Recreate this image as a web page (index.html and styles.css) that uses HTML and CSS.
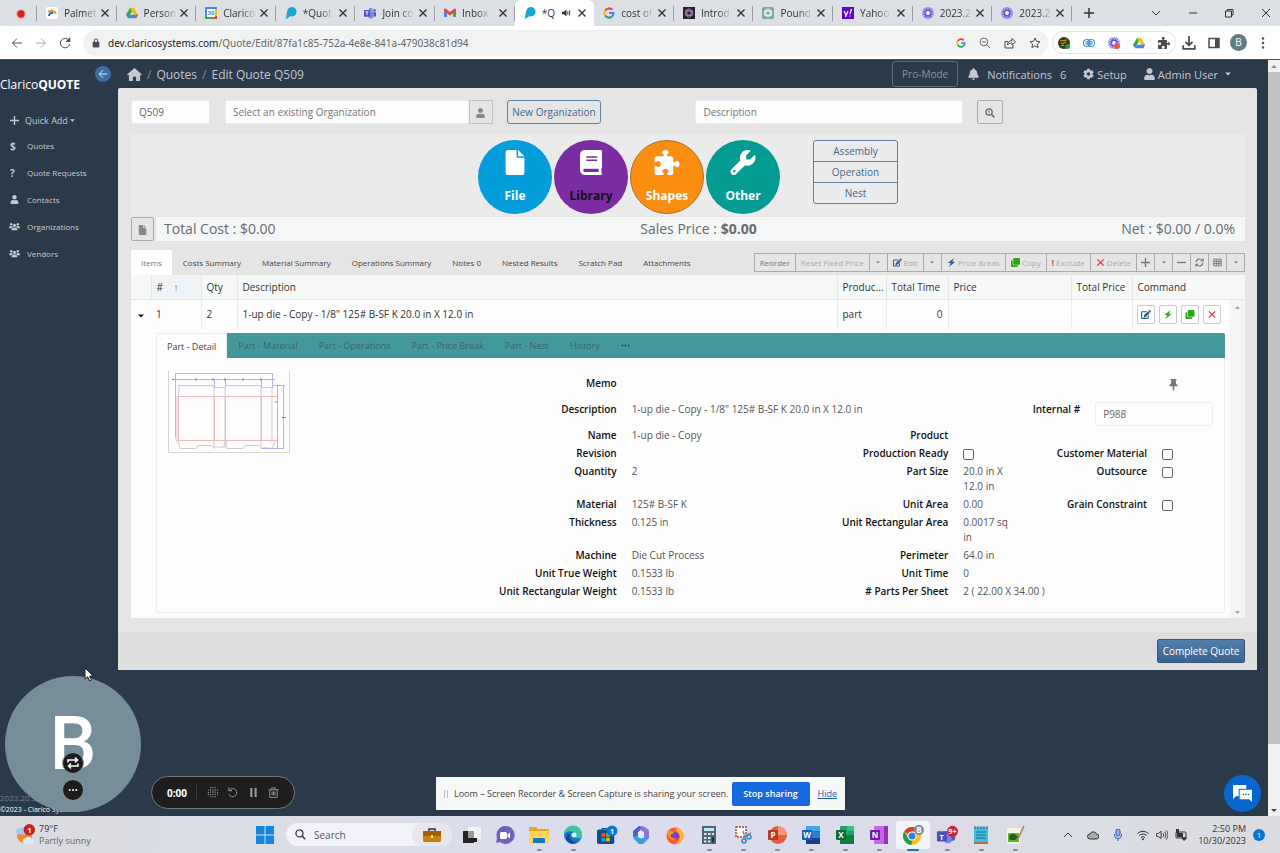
FILE: index.html
```html
<!DOCTYPE html>
<html lang="en">
<head>
    <meta charset="UTF-8">
    <meta name="viewport" content="width=device-width, initial-scale=1.0">
    <title>Edit Quote Q509</title>
    <link rel="stylesheet" href="styles.css">
</head>
<body>
    <!-- icon sprite -->
    <svg class="sprite" aria-hidden="true">
        <symbol id="user" viewBox="0 0 448 512"><path d="M224 256c70.7 0 128-57.3 128-128S294.7 0 224 0 96 57.3 96 128s57.3 128 128 128zm89.600 32h-16.700c-22.200 10.200-46.900 16-72.900 16s-50.600-5.800-72.900-16h-16.700C60.200 288 0 348.200 0 422.400V464c0 26.500 21.500 48 48 48h352c26.500 0 48-21.500 48-48v-41.600c0-74.200-60.200-134.400-134.400-134.400z"/></symbol>
        <symbol id="users" viewBox="0 0 20 14"><circle cx="4" cy="3" r="2.200"/><circle cx="16" cy="3" r="2.200"/><circle cx="10" cy="5" r="2.800"/><path d="M0 10c0-3 1.500-4 4-4 1 0 2 .2 2.500.8C6.500 8 6.500 8 6 9l-1 1zM20 10c0-3-1.500-4-4-4-1 0-2 .2-2.500.8 0 1.200 0 1.200.5 2.200l1 1zM4.500 14c0-3.500 2-5 5.500-5s5.500 1.500 5.500 5z"/></symbol>
        <symbol id="clone" viewBox="0 0 512 512"><path d="M464 0c26.510 0 48 21.490 48 48v288c0 26.510-21.490 48-48 48H176c-26.510 0-48-21.490-48-48V48c0-26.510 21.490-48 48-48h288M176 416c-44.112 0-80-35.888-80-80V128H48c-26.510 0-48 21.490-48 48v288c0 26.510 21.490 48 48 48h288c26.510 0 48-21.490 48-48v-48H176z"/></symbol>
        <symbol id="edit" viewBox="0 0 576 512"><path d="M402.600 83.200l90.200 90.200c3.800 3.800 3.800 10 0 13.800L274.400 405.600l-92.800 10.300c-12.400 1.400-22.900-9.100-21.500-21.500l10.300-92.800L388.800 83.200c3.800-3.800 10-3.800 13.800 0zm162-22.900l-48.800-48.800c-15.200-15.200-39.900-15.200-55.200 0l-35.400 35.400c-3.800 3.800-3.800 10 0 13.800l90.200 90.200c3.800 3.800 10 3.800 13.800 0l35.400-35.400c15.200-15.300 15.200-40 0-55.200zM384 346.200V448H64V128h229.800c3.200 0 6.200-1.300 8.500-3.500l40-40c7.600-7.600 2.200-20.500-8.500-20.500H48C21.500 64 0 85.500 0 112v352c0 26.500 21.500 48 48 48h352c26.500 0 48-21.500 48-48V306.200c0-10.700-12.900-16-20.500-8.500l-40 40c-2.200 2.300-3.500 5.300-3.500 8.500z"/></symbol>
        <symbol id="file" viewBox="0 0 384 512"><path d="M224 136V0H48C21 0 0 21 0 48v416c0 27 21 48 48 48h288c27 0 48-21 48-48V160H248c-13 0-24-11-24-24zm160-8H256V0z"/></symbol>
        <symbol id="book" viewBox="0 0 448 512"><path d="M448 360V24c0-13.300-10.700-24-24-24H96C43 0 0 43 0 96v320c0 53 43 96 96 96h328c13.300 0 24-10.700 24-24v-16c0-7.500-3.500-14.300-8.900-18.700-4.200-15.400-4.200-59.300 0-74.700 5.400-4.300 8.900-11.100 8.900-18.600zM128 134c0-3.300 2.700-6 6-6h212c3.300 0 6 2.700 6 6v20c0 3.300-2.700 6-6 6H134c-3.300 0-6-2.700-6-6v-20zm0 64c0-3.300 2.700-6 6-6h212c3.300 0 6 2.700 6 6v20c0 3.300-2.700 6-6 6H134c-3.300 0-6-2.700-6-6v-20zm253.400 250H96c-17.700 0-32-14.300-32-32 0-17.600 14.400-32 32-32h285.400c-1.900 17.100-1.900 46.900 0 64z"/></symbol>
        <symbol id="puzzle" viewBox="0 0 512 512"><path d="M192 104.800c0-9.200-5.800-17.300-13.200-22.800C167.200 73.300 160 61.300 160 48c0-26.500 28.700-48 64-48s64 21.500 64 48c0 13.300-7.200 25.300-18.800 34c-7.400 5.500-13.200 13.600-13.200 22.800c0 12.800 10.400 23.200 23.200 23.200H336c26.500 0 48 21.500 48 48v56.800c0 12.800 10.400 23.200 23.200 23.200c9.200 0 17.300-5.800 22.800-13.200c8.700-11.600 20.700-18.800 34-18.800c26.500 0 48 28.700 48 64s-21.500 64-48 64c-13.300 0-25.300-7.200-34-18.800c-5.500-7.400-13.600-13.200-22.800-13.200c-12.800 0-23.200 10.400-23.200 23.200V464c0 26.500-21.500 48-48 48H279.200c-12.800 0-23.200-10.400-23.200-23.200c0-9.200 5.800-17.300 13.200-22.800c11.600-8.700 18.800-20.700 18.800-34c0-26.500-28.700-48-64-48s-64 21.500-64 48c0 13.300 7.200 25.300 18.800 34c7.400 5.500 13.200 13.600 13.200 22.800c0 12.800-10.400 23.200-23.200 23.200H48c-26.500 0-48-21.500-48-48V343.200C0 330.400 10.400 320 23.200 320c9.200 0 17.300 5.800 22.800 13.200C54.700 344.800 66.700 352 80 352c26.500 0 48-28.700 48-64s-21.500-64-48-64c-13.300 0-25.300 7.200-34 18.800C40.500 250.200 32.400 256 23.200 256C10.400 256 0 245.600 0 232.800V176c0-26.500 21.500-48 48-48H168.800c12.800 0 23.200-10.400 23.200-23.200z"/></symbol>
        <symbol id="wrench" viewBox="0 0 512 512"><path d="M352 320c88.400 0 160-71.600 160-160c0-15.300-2.200-30.100-6.200-44.200c-3.100-10.800-16.400-13.200-24.300-5.300l-76.800 76.800c-3 3-7.100 4.700-11.300 4.700H336c-8.800 0-16-7.200-16-16V118.600c0-4.200 1.700-8.300 4.700-11.300l76.800-76.800c7.900-7.900 5.400-21.200-5.300-24.300C382.100 2.200 367.300 0 352 0C263.600 0 192 71.600 192 160c0 19.100 3.400 37.500 9.500 54.500L19.900 396.100C7.200 408.800 0 426.100 0 444.100C0 481.600 30.400 512 67.900 512c18 0 35.300-7.200 48-19.900L297.500 310.500c17 6.200 35.400 9.500 54.500 9.500zM80 408a24 24 0 1 1 0 48 24 24 0 1 1 0-48z"/></symbol>
        <symbol id="bell" viewBox="0 0 448 512"><path d="M224 0c-17.700 0-32 14.300-32 32V51.200C119 66 64 130.600 64 208v18.800c0 47-17.300 92.400-48.500 127.600l-7.400 8.300c-8.400 9.400-10.400 22.900-5.300 34.400S19.400 416 32 416H416c12.600 0 24-7.400 29.200-18.900s3.100-25-5.300-34.400l-7.400-8.300C401.300 319.200 384 273.900 384 226.800V208c0-77.400-55-142-128-156.800V32c0-17.700-14.300-32-32-32zm45.300 493.300c12-12 18.700-28.300 18.700-45.300H224 160c0 17 6.700 33.300 18.700 45.300s28.300 18.700 45.300 18.700s33.300-6.700 45.300-18.700z"/></symbol>
        <symbol id="gear" viewBox="0 0 512 512"><path d="M487.400 315.700l-42.600-24.600c4.300-23.200 4.300-47 0-70.200l42.600-24.600c4.900-2.800 7.100-8.600 5.500-14-11.100-35.600-30-67.800-54.700-94.600-3.800-4.100-10-5.100-14.800-2.300L380.800 110c-17.900-15.400-38.500-27.300-60.800-35.100V25.800c0-5.600-3.900-10.500-9.400-11.700-36.700-8.200-74.300-7.800-109.200 0-5.500 1.200-9.400 6.100-9.400 11.700V75c-22.200 7.900-42.800 19.800-60.800 35.100L88.700 85.500c-4.900-2.800-11-1.900-14.800 2.300-24.700 26.700-43.600 58.900-54.700 94.600-1.700 5.400.6 11.200 5.500 14L67.300 221c-4.300 23.200-4.300 47 0 70.200l-42.600 24.600c-4.900 2.800-7.100 8.600-5.500 14 11.100 35.600 30 67.800 54.700 94.600 3.800 4.100 10 5.100 14.800 2.300l42.600-24.600c17.900 15.400 38.500 27.300 60.800 35.100v49.200c0 5.600 3.900 10.500 9.400 11.700 36.700 8.200 74.300 7.800 109.200 0 5.500-1.200 9.400-6.100 9.400-11.700v-49.200c22.200-7.900 42.800-19.800 60.800-35.100l42.600 24.600c4.900 2.800 11 1.900 14.800-2.300 24.700-26.700 43.600-58.900 54.700-94.600 1.500-5.500-.7-11.300-5.600-14.100zM256 336c-44.100 0-80-35.900-80-80s35.900-80 80-80 80 35.900 80 80-35.900 80-80 80z"/></symbol>
        <symbol id="home" viewBox="0 0 16 14"><path d="M8 0l8 7-1 1.200-1-.8V14H9.700V9.500H6.300V14H2V7.400l-1 .8L0 7z"/></symbol>
        <symbol id="bolt" viewBox="0 0 12 12"><path d="M9.500 0L1 6.500h4L2.500 12 11 5H7z"/></symbol>
        <symbol id="pin" viewBox="0 0 10 14"><path d="M1.500 0h7v1.500h-1l.5 4c1.200.6 2 1.500 2 3H6V12l-1 2-1-2V8.500H0c0-1.500.8-2.400 2-3l.5-4h-1z"/></symbol>
        <symbol id="cross" viewBox="0 0 10 10"><path d="M1.500 1.500l7 7M8.500 1.500l-7 7" fill="none" stroke="currentColor" stroke-width="1.400"/></symbol>
        <symbol id="plus" viewBox="0 0 10 10"><path d="M5 0v10M0 5h10" fill="none" stroke="currentColor" stroke-width="1.500"/></symbol>
        <symbol id="minus" viewBox="0 0 10 10"><path d="M0 5h10" fill="none" stroke="currentColor" stroke-width="1.500"/></symbol>
        <symbol id="caret" viewBox="0 0 8 4"><path d="M0 0h8L4 4z"/></symbol>
        <symbol id="caret-up" viewBox="0 0 8 4"><path d="M0 4h8L4 0z"/></symbol>
        <symbol id="refresh" viewBox="0 0 12 12"><path d="M1.500 5.500A4.500 4.500 0 0 1 9.500 3M10.500 6.500A4.500 4.500 0 0 1 2.500 9" fill="none" stroke="currentColor" stroke-width="1.500"/><path d="M11.500 0v4.500H7zM.5 12V7.500H5z"/></symbol>
        <symbol id="table" viewBox="0 0 12 12"><path d="M1 1.500h10v9H1zM1 4.500h10M1 7.500h10M4.500 2v8M8 2v8" fill="none" stroke="currentColor" stroke-width="1.200"/></symbol>
        <symbol id="search" viewBox="0 0 14 14"><path d="M9.300 9.300L13 13" fill="none" stroke="currentColor" stroke-width="1.600"/><circle cx="5.700" cy="5.700" r="4.500" fill="none" stroke="currentColor" stroke-width="1.400"/></symbol>
        <symbol id="lookup" viewBox="0 0 14 14"><path d="M9 9l4 4" fill="none" stroke="currentColor" stroke-width="2.600"/><circle cx="5.700" cy="5.700" r="4.400" fill="none" stroke="currentColor" stroke-width="2"/><path d="M5.700 3.500v4.400M4.500 5h1.500" fill="none" stroke="currentColor"/></symbol>
        <symbol id="google" viewBox="0 0 14 14"><g fill="none" stroke-width="2.400"><path d="M2.600 4.200A5.200 5.200 0 0 1 10.800 3.200" stroke="#ea4335"/><path d="M2.600 9.800a5.200 5.200 0 0 1 0-5.600" stroke="#fbbc05"/><path d="M2.600 9.800a5.200 5.200 0 0 0 7.800 1.400" stroke="#34a853"/><path d="M7 7h5.200a5.200 5.200 0 0 1-1.800 4.200" stroke="#4285f4"/></g></symbol>
        <symbol id="drive" viewBox="0 0 14 12"><path d="M4.800 0h4.400L14 8H9.500z" fill="#fbbc04"/><path d="M4.800 0L7 4 2.300 12 0 8z" fill="#34a853"/><path d="M4.500 8H14l-2.300 4H2.300z" fill="#4285f4"/><path d="M11.600 8H14l-2.300 4z" fill="#ea4335"/></symbol>
        <symbol id="loom" viewBox="0 0 14 14"><g stroke="#6259e8" stroke-width="1.300"><path d="M7 0v14M0 7h14M2 2l10 10M12 2L2 12M4.300.6l5.400 12.800M9.700.6L4.300 13.400M.6 4.300l12.800 5.400M.6 9.700l12.800-5.400"/></g><circle cx="7" cy="7" r="3.600" fill="#6259e8"/><circle cx="7" cy="7" r="2.200" fill="#fff"/></symbol>
        <symbol id="quote" viewBox="0 0 14 14"><circle cx="8" cy="5.500" r="5.500" fill="#18a5d4"/><path d="M2.500 5L1 14l5-3z" fill="#18a5d4"/></symbol>
        <symbol id="teams" viewBox="0 0 16 14"><circle cx="9" cy="2.500" r="2.500" fill="#7b83eb"/><circle cx="14" cy="3.500" r="1.700" fill="#5059c9"/><path d="M6 5h7v6a4 4 0 0 1-7 2z" fill="#7b83eb"/><path d="M13 6h3v4a2.500 2.500 0 0 1-3 2z" fill="#5059c9"/><path d="M0 3h8v9H0z" fill="#4b53bc"/><path d="M2 5.500h4M4 5.500V10" stroke="#fff" stroke-width="1.200"/></symbol>
        <symbol id="openai" viewBox="0 0 14 14"><g fill="none" stroke="currentColor" stroke-width=".9"><ellipse cx="7" cy="7" rx="2.500" ry="5"/><ellipse cx="7" cy="7" rx="2.500" ry="5" transform="rotate(60 7 7)"/><ellipse cx="7" cy="7" rx="2.500" ry="5" transform="rotate(120 7 7)"/></g></symbol>
        <symbol id="dots" viewBox="0 0 12 4"><circle cx="2" cy="2" r="1.200"/><circle cx="6" cy="2" r="1.200"/><circle cx="10" cy="2" r="1.200"/></symbol>
    </svg>

    <div class="tab-strip">
        <div class="tab-pinned"><svg class="i12" viewBox="0 0 12 12"><circle cx="6" cy="6" r="5" fill="#f2b8b5"/><circle cx="6" cy="6" r="3.700" fill="#d5221d"/></svg></div>
        <div class="tabs">
            <div class="tab"><svg class="i12" viewBox="0 0 12 12"><rect width="12" height="12" rx="2" fill="#fff"/><path d="M2 5a5 5 0 0 1 8 2" fill="none" stroke="#f28c28" stroke-width="2"/><path d="M3 9a3 3 0 0 1 4-3" fill="none" stroke="#1b6ca8" stroke-width="2"/></svg><span>Palmet</span><button aria-label="Close"><svg><use href="#cross"/></svg></button></div>
            <div class="tab"><svg class="i12"><use href="#drive"/></svg><span>Person</span><button aria-label="Close"><svg><use href="#cross"/></svg></button></div>
            <div class="tab"><svg class="i12" viewBox="0 0 12 12"><path d="M0 0h12v12H0z" fill="#4285f4"/><path d="M9 9h3v3H9z" fill="#ea4335"/><path d="M0 9h9v3H0z" fill="#34a853"/><path d="M9 2h3v7H9z" fill="#fbbc04"/><path d="M2 2h8v8H2z" fill="#fff"/><text x="6" y="8" class="day">30</text></svg><span>Clarico</span><button aria-label="Close"><svg><use href="#cross"/></svg></button></div>
            <div class="tab"><svg class="i12"><use href="#quote"/></svg><span>*Quot</span><button aria-label="Close"><svg><use href="#cross"/></svg></button></div>
            <div class="tab"><svg class="i12"><use href="#teams"/></svg><span>Join co</span><button aria-label="Close"><svg><use href="#cross"/></svg></button></div>
            <div class="tab"><svg class="i12" viewBox="0 0 12 10"><path d="M0 1v8h3V4z" fill="#4285f4"/><path d="M12 1v8H9V4z" fill="#34a853"/><path d="M0 1l1.500-.5L6 4 10.500.5 12 1v2L6 7.500 0 3z" fill="#ea4335"/></svg><span>Inbox</span><button aria-label="Close"><svg><use href="#cross"/></svg></button></div>
            <div class="tab active"><svg class="i12"><use href="#quote"/></svg><span class="short">*Q</span><svg class="sound" viewBox="0 0 10 8"><path d="M0 2.500h2L5 0v8L2 5.500H0z"/><path d="M6.500 2v4M8.500 1v6" stroke="#333"/></svg><button aria-label="Close"><svg><use href="#cross"/></svg></button></div>
            <div class="tab"><svg class="i12"><use href="#google"/></svg><span>cost of</span><button aria-label="Close"><svg><use href="#cross"/></svg></button></div>
            <div class="tab"><svg class="i12 gpt-dark"><use href="#openai"/></svg><span>Introd</span><button aria-label="Close"><svg><use href="#cross"/></svg></button></div>
            <div class="tab"><svg class="i12 gpt-green"><use href="#openai"/></svg><span>Pound</span><button aria-label="Close"><svg><use href="#cross"/></svg></button></div>
            <div class="tab"><svg class="i12" viewBox="0 0 12 12"><path d="M0 0h12v12H0z" fill="#5f01d1"/><path d="M2 4l2 4M6 4L3.500 10M9.500 2L8 7M7.700 8.500v1" stroke="#fff" stroke-width="1.300"/></svg><span>Yahoo</span><button aria-label="Close"><svg><use href="#cross"/></svg></button></div>
            <div class="tab"><svg class="i12"><use href="#loom"/></svg><span>2023.2</span><button aria-label="Close"><svg><use href="#cross"/></svg></button></div>
            <div class="tab"><svg class="i12"><use href="#loom"/></svg><span>2023.2</span><button aria-label="Close"><svg><use href="#cross"/></svg></button></div>
        </div>
        <div class="window-controls">
            <button aria-label="New tab"><svg><use href="#plus"/></svg></button>
            <button aria-label="Search tabs"><svg viewBox="0 0 10 10"><path d="M1 3l4 4 4-4" class="line"/></svg></button>
            <button aria-label="Minimize"><svg viewBox="0 0 10 10"><path d="M1 5h8" class="line"/></svg></button>
            <button aria-label="Restore"><svg viewBox="0 0 10 10"><path d="M1.500 3h6v6h-6zM3.500 3V1.500H9v5.500H7.500" class="line"/></svg></button>
            <button aria-label="Close window"><svg viewBox="0 0 10 10"><path d="M1 1l8 8M9 1L1 9" class="line"/></svg></button>
        </div>
    </div>

    <div class="address-bar">
        <button aria-label="Back"><svg viewBox="0 0 12 12"><path d="M11 6H1.500M6 1.500L1.500 6 6 10.500" class="line"/></svg></button>
        <button aria-label="Forward" class="dim"><svg viewBox="0 0 12 12"><path d="M1 6h9.500M6 1.500L10.500 6 6 10.500" class="line"/></svg></button>
        <button aria-label="Reload"><svg viewBox="0 0 12 12"><path d="M10 3.500A4.700 4.700 0 1 0 10.700 7" class="line"/><path d="M11.300 0v5H6.500z"/></svg></button>
        <div class="omnibox">
            <svg class="i10" viewBox="0 0 10 12"><rect x="1" y="4.500" width="8" height="7" rx="1"/><path d="M3 5V3a2 2 0 0 1 4 0v2" fill="none" stroke="currentColor" stroke-width="1.200"/></svg>
            <span class="url"><b>dev.claricosystems.com</b>/Quote/Edit/87fa1c85-752a-4e8e-841a-479038c81d94</span>
            <svg class="i10"><use href="#google"/></svg>
            <svg class="i12" viewBox="0 0 14 14"><path d="M9.300 9.300L13 13M3.500 5.700h4.400" class="line"/><circle cx="5.700" cy="5.700" r="4.500" class="line"/></svg>
            <svg class="i12" viewBox="0 0 12 12"><path d="M4 4.500H1v6.500h8V8M3.500 8c0-3 2-4.500 4.500-4.500V1.500L11.500 5 8 8V6C6 6 4.500 6.500 3.500 8z" class="line"/></svg>
            <svg class="i12" viewBox="0 0 12 12"><path d="M6 1l1.500 3.300 3.500.4-2.600 2.400.7 3.500L6 8.900l-3.100 1.700.7-3.500L1 4.700l3.500-.4z" class="line"/></svg>
        </div>
        <div class="extensions">
            <svg class="i12" viewBox="0 0 12 12"><circle cx="6" cy="6" r="6" fill="#3b3a14"/><path d="M2 4l7-1M3 7l5-2M3 9l3-1" stroke="#c9a53c"/><circle cx="9.500" cy="9.500" r="2.500" fill="#1e9c3c"/></svg>
            <svg class="i12" viewBox="0 0 14 10"><g fill="none" stroke="#4a8fd0" stroke-width="1.200"><circle cx="4.500" cy="5" r="4"/><circle cx="9.500" cy="5" r="4"/><circle cx="5" cy="5" r="1.800"/><circle cx="9" cy="5" r="1.800"/></g></svg>
            <svg class="i12" viewBox="0 0 14 14"><use href="#loom"/><circle cx="10.500" cy="10.500" r="3.500" fill="#f0553f"/></svg>
            <svg class="i12"><use href="#drive"/></svg>
            <svg class="i12"><use href="#puzzle"/></svg>
        </div>
        <svg class="i14" viewBox="0 0 12 12"><path d="M6 0v7.500M3 5l3 3 3-3M1 8v3h10V8" class="line medium"/></svg>
        <svg class="i12" viewBox="0 0 12 12"><path d="M1 1.500h10v9H1z" class="line medium"/><path d="M7 1h4v10H7z"/></svg>
        <span class="profile">B</span>
        <svg class="i12" viewBox="0 0 12 12"><circle cx="6" cy="1.500" r="1.200"/><circle cx="6" cy="6" r="1.200"/><circle cx="6" cy="10.500" r="1.200"/></svg>
    </div>

    <div class="app">
        <nav class="sidebar">
            <div class="brand"><span>Clarico<b>QUOTE</b></span><button class="collapse" aria-label="Collapse menu"><svg viewBox="0 0 12 12"><path d="M11 6H1.500M6 1.500L1.500 6 6 10.500" class="line"/></svg></button></div>
            <a href="#" class="quick"><svg><use href="#plus"/></svg>Quick Add<svg class="caret"><use href="#caret"/></svg></a>
            <a href="#"><i>$</i>Quotes</a>
            <a href="#"><i>?</i>Quote Requests</a>
            <a href="#"><svg><use href="#user"/></svg>Contacts</a>
            <a href="#"><svg><use href="#users"/></svg>Organizations</a>
            <a href="#"><svg><use href="#users"/></svg>Vendors</a>
            <div class="version">2023.20.5</div>
            <div class="copyright">©2023 - Clarico Systems</div>
        </nav>

        <main class="main">
            <header class="topbar">
                <svg class="home"><use href="#home"/></svg>
                <span class="slash">/</span><a href="#">Quotes</a><span class="slash">/</span><span>Edit Quote Q509</span>
                <div class="top-links">
                    <button class="pro-mode">Pro-Mode</button>
                    <a href="#" class="notify"><svg><use href="#bell"/></svg>Notifications<span>6</span></a>
                    <a href="#" class="setup"><svg><use href="#gear"/></svg>Setup</a>
                    <a href="#"><svg><use href="#user"/></svg>Admin User<svg class="caret"><use href="#caret"/></svg></a>
                </div>
            </header>

            <section class="panel">
                <div class="panel-body">
                    <div class="quote-row">
                        <input class="quote-no" aria-label="Quote number" value="Q509">
                        <div class="org">
                            <input aria-label="Organization" placeholder="Select an existing Organization">
                            <button aria-label="Contact"><svg><use href="#user"/></svg></button>
                        </div>
                        <button class="outline new-org">New Organization</button>
                        <input class="quote-desc" aria-label="Description" placeholder="Description">
                        <button class="lookup" aria-label="Search"><svg><use href="#lookup"/></svg></button>
                    </div>

                    <div class="add-row">
                        <div class="circles">
                            <button class="circle file"><svg><use href="#file"/></svg>File</button>
                            <button class="circle library"><svg><use href="#book"/></svg>Library</button>
                            <button class="circle shapes"><svg><use href="#puzzle"/></svg>Shapes</button>
                            <button class="circle other"><svg><use href="#wrench"/></svg>Other</button>
                        </div>
                        <div class="stack">
                            <button>Assembly</button>
                            <button>Operation</button>
                            <button>Nest</button>
                        </div>
                    </div>

                    <div class="totals">
                        <button aria-label="Report"><svg><use href="#file"/></svg></button>
                        <div class="totals-bar">
                            <span>Total Cost : $0.00</span>
                            <span>Sales Price : <b>$0.00</b></span>
                            <span>Net : $0.00 / 0.0%</span>
                        </div>
                    </div>

                    <div class="item-tabs">
                        <button class="item-tab active">Items</button>
                        <button class="item-tab">Costs Summary</button>
                        <button class="item-tab">Material Summary</button>
                        <button class="item-tab">Operations Summary</button>
                        <button class="item-tab">Notes 0</button>
                        <button class="item-tab">Nested Results</button>
                        <button class="item-tab">Scratch Pad</button>
                        <button class="item-tab">Attachments</button>
                        <div class="tools">
                            <button class="on">Reorder</button>
                            <button>Reset Fixed Price</button>
                            <button class="drop" aria-label="Price options"><svg class="caret"><use href="#caret"/></svg></button>
                            <button><svg class="blue"><use href="#edit"/></svg>Edit</button>
                            <button class="drop" aria-label="Edit options"><svg class="caret"><use href="#caret"/></svg></button>
                            <button><svg class="blue"><use href="#bolt"/></svg>Price Break</button>
                            <button><svg class="green"><use href="#clone"/></svg>Copy</button>
                            <button><b class="red">!</b>Exclude</button>
                            <button><svg class="red"><use href="#cross"/></svg>Delete</button>
                            <button class="drop" aria-label="Add"><svg><use href="#plus"/></svg></button>
                            <button class="drop" aria-label="Add options"><svg class="caret"><use href="#caret"/></svg></button>
                            <button class="drop" aria-label="Remove"><svg><use href="#minus"/></svg></button>
                            <button class="drop" aria-label="Refresh"><svg><use href="#refresh"/></svg></button>
                            <button class="drop" aria-label="Columns"><svg><use href="#table"/></svg></button>
                            <button class="drop" aria-label="Column options"><svg class="caret"><use href="#caret"/></svg></button>
                        </div>
                    </div>

                    <table class="items">
                        <colgroup>
                            <col class="c-expand"><col class="c-num"><col class="c-qty"><col><col class="c-product"><col class="c-time"><col class="c-price"><col class="c-total"><col class="c-command"><col class="c-scroll">
                        </colgroup>
                        <thead>
                            <tr><th></th><th class="sorted"># <span>↑</span></th><th>Qty</th><th>Description</th><th>Produc...</th><th>Total Time</th><th>Price</th><th>Total Price</th><th class="bare">Command</th><th class="bare"></th></tr>
                        </thead>
                        <tbody>
                            <tr class="item">
                                <td class="expand"><svg><use href="#caret"/></svg></td><td>1</td><td>2</td>
                                <td>1-up die - Copy - 1/8" 125# B-SF K 20.0 in X 12.0 in</td>
                                <td>part</td><td class="num">0</td><td></td><td></td>
                                <td class="commands"><div>
                                    <button aria-label="Edit item"><svg class="blue"><use href="#edit"/></svg></button>
                                    <button aria-label="Price item"><svg class="green"><use href="#bolt"/></svg></button>
                                    <button aria-label="Copy item"><svg class="green"><use href="#clone"/></svg></button>
                                    <button aria-label="Delete item"><svg class="red"><use href="#cross"/></svg></button>
                                </div></td>
                                <td class="scroll" rowspan="2"><div><svg><use href="#caret-up"/></svg><svg><use href="#caret"/></svg></div></td>
                            </tr>
                            <tr>
                                <td colspan="9" class="nested">
                                    <div class="part">
                                        <div class="part-tabs">
                                            <button class="active">Part - Detail</button>
                                            <button>Part - Material</button>
                                            <button>Part - Operations</button>
                                            <button>Part - Price Break</button>
                                            <button>Part - Nest</button>
                                            <button>History</button>
                                            <button class="more" aria-label="More tabs"><svg><use href="#dots"/></svg></button>
                                        </div>
                                        <div class="part-body">
                                            <svg class="thumb" viewBox="0 0 122 82">
                                                <path d="M.5 0v81.500h121V0" stroke="#d8d8c8"/>
                                                <path d="M10 14.500h35l1 2h11l1-2h34l1 2h11M11 14.500v3l-1 8v44l2 8h16l2-3h13l3 3 1-2 8 1 3-7 1 8h16l2-3h14l3 3 2-1 8 1 3-7M46 17v60M57 17v60M93 17v60M104 17v55M8 25v44l2 3" stroke="#bbb4bf" stroke-width=".700"/>
                                                <path d="M10 25.500h99M10 69.500h99M10.500 25v44M46.500 25v44M57.500 25v44M93.500 25v44" stroke="#f0baba"/>
                                                <path d="M7 2.500h97M7.500 2v64M104.500 2v15M4 8.500h103M46.500 8v8M57.500 8v8M93.500 8v8M104 14.500h13M109.500 14v63M115.500 14v63M93 77.500h23" stroke="#b3b2f0"/>
                                                <path d="M4 8.500h3M28 7v3M45 7v3M57 7v3M75 7v3M93 7v3M108 30v2M114 46.500h4" stroke="#7c7adf"/>
                                            </svg>
                                            <div class="fields">
                                                <div class="field wide memo"><b>Memo</b><span></span><i></i><svg class="pin"><use href="#pin"/></svg></div>
                                                <div class="field wide"><b>Description</b><span>1-up die - Copy - 1/8" 125# B-SF K 20.0 in X 12.0 in</span><label for="internal">Internal #</label><input id="internal" class="internal" value="P988"></div>
                                                <div class="field"><b>Name</b><span>1-up die - Copy</span><b>Product</b></div>
                                                <div class="field"><b>Revision</b><span></span><label for="ready">Production Ready</label><input type="checkbox" id="ready"><label for="customer">Customer Material</label><input type="checkbox" id="customer"></div>
                                                <div class="field"><b>Quantity</b><span>2</span><b>Part Size</b><span>20.0 in X 12.0 in</span><label for="outsource">Outsource</label><input type="checkbox" id="outsource"></div>
                                                <div class="field"><b>Material</b><span>125# B-SF K</span><b>Unit Area</b><span>0.00</span><label for="grain">Grain Constraint</label><input type="checkbox" id="grain"></div>
                                                <div class="field"><b>Thickness</b><span>0.125 in</span><b>Unit Rectangular Area</b><span>0.0017 sq in</span></div>
                                                <div class="field"><b>Machine</b><span>Die Cut Process</span><b>Perimeter</b><span>64.0 in</span></div>
                                                <div class="field"><b>Unit True Weight</b><span>0.1533 lb</span><b>Unit Time</b><span>0</span></div>
                                                <div class="field"><b>Unit Rectangular Weight</b><span>0.1533 lb</span><b># Parts Per Sheet</b><span class="nowrap">2 ( 22.00 X 34.00 )</span></div>
                                            </div>
                                        </div>
                                    </div>
                                </td>
                            </tr>
                        </tbody>
                    </table>
                </div>
                <footer class="panel-footer"><button>Complete Quote</button></footer>
            </section>
        </main>

        <div class="page-scroll"><svg><use href="#caret-up"/></svg><div class="thumb-bar"></div><svg class="down"><use href="#caret"/></svg></div>

        <!-- floating layers -->
        <div class="camera">
            B
            <button class="swap" aria-label="Switch camera"><svg viewBox="0 0 14 14"><path d="M2 6.500V4h9.500M9 1.500L11.500 4 9 6.500M12 7.500V10H2.500M5 7.500L2.500 10 5 12.500" class="line medium"/></svg></button>
            <button class="dots" aria-label="More options"><svg><use href="#dots"/></svg></button>
        </div>
        <svg class="cursor" viewBox="0 0 10 15"><path d="M1 1v11l2.700-2.300L5.500 14l2-.9-1.800-4L9.200 9z" fill="#fff" stroke="#222"/></svg>
        <div class="recorder">
            <b>0:00</b>
            <span class="divider"></span>
            <svg viewBox="0 0 12 12"><path d="M1.500 3v6M4 0v12M6.500 0v12M9 0v12M11.500 3v6" stroke="currentColor" stroke-width="1.200" stroke-dasharray="1.200 1.300"/></svg>
            <svg viewBox="0 0 12 12"><path d="M2.500 3.500A4.500 4.500 0 1 1 2 8M2 .5v3.500h3.500" class="line"/></svg>
            <svg viewBox="0 0 12 12"><path d="M2.500 1h2.300v10H2.500zM7.200 1h2.300v10H7.200z"/></svg>
            <svg viewBox="0 0 12 12"><path d="M.5 3h11M4 3V1h4v2M2 3v8.300h8V3M4.500 5v4M6 5v4M7.500 5v4" class="line"/></svg>
        </div>
        <div class="share-bar">
            <span class="grip"></span>
            <span class="share-text">Loom – Screen Recorder &amp; Screen Capture is sharing your screen.</span>
            <button>Stop sharing</button>
            <a href="#">Hide</a>
        </div>
        <button class="chat" aria-label="Chat"><svg viewBox="0 0 20 18"><path d="M0 0h14v4H6v8H3l-3 3z" fill="#fff"/><path d="M7 5h13v13l-3-3H7z" fill="#fff"/><path d="M10 10h1.500M12.800 10h1.500M15.600 10h1.500" stroke="#0a66cf" stroke-width="1.300"/></svg></button>
    </div>

    <div class="taskbar">
        <div class="weather">
            <svg viewBox="0 0 22 22"><circle cx="10" cy="12" r="8" fill="#f08a24"/><path d="M1 9a3 3 0 0 1 3-4 4 4 0 0 1 7 3 2 2 0 0 1-1 3H3z" fill="#a8c8f4"/><path d="M8 19a3 3 0 0 1 3-4 4 4 0 0 1 7 1 2 2 0 0 1 0 5h-8z" fill="#dce9fb"/><circle cx="15" cy="6" r="6" fill="#c62020"/><text x="15" y="9" class="badge-text">1</text></svg>
            <div><strong>79°F</strong><span>Partly sunny</span></div>
        </div>
        <div class="apps">
            <svg class="start" viewBox="0 0 18 18"><path d="M0 0h8.500v8.500H0zM9.500 0H18v8.500H9.500zM0 9.500h8.500V18H0zM9.500 9.500H18V18H9.500z" fill="#1487dc"/></svg>
            <label class="search"><svg><use href="#search"/></svg><input placeholder="Search" aria-label="Search"><span class="brief"><svg viewBox="0 0 18 14"><path d="M6 3V1h6v2" fill="none" stroke="#4b3010" stroke-width="1.500"/><rect y="3" width="18" height="11" rx="1" fill="#c8800f"/><path d="M0 3h18v5H0z" fill="#a05d0b"/><path d="M8 7h2v3H8z" fill="#ffe07a"/></svg></span></label>
            <span class="app-icon"><svg viewBox="0 0 20 20"><path d="M7 2h13v12H7z" fill="#f2f2f2"/><path d="M2 6h11v12H2z" fill="#222"/><path d="M7 6h6v7H7z" fill="#999"/><path d="M2 13h14v4H2z" fill="#222"/></svg></span>
            <span class="app-icon"><svg viewBox="0 0 20 20"><path d="M10 1a9 9 0 1 1-5 16l-4 1 1-5a9 9 0 0 1 8-12z" fill="#6f62bd"/><rect x="5" y="7" width="7" height="7" rx="1.500" fill="#fff"/><path d="M12.500 9.500L15 7.500v6l-2.500-2z" fill="#fff"/></svg></span>
            <span class="app-icon running"><svg viewBox="0 0 20 20"><path d="M0 3q0-1 1-1h6l2 2h10q1 0 1 1v12H0z" fill="#e7a81d"/><path d="M0 6h20v11q0 1-1 1H1q-1 0-1-1z" fill="#ffd25a"/><path d="M4 18v-4q0-1 1-1h10q1 0 1 1v4z" fill="#1976c5"/></svg></span>
            <span class="app-icon running"><svg viewBox="0 0 20 20"><circle cx="10" cy="10" r="9" fill="#1476c6"/><path d="M1 9a9 9 0 0 1 18 1c0 4-5 4-7 2 3-4-5-9-11-3z" fill="#3fc6a0"/><path d="M7 9c-2 4 3 9 8 8-4 3-10 2-12-3 0-3 2-5 4-5z" fill="#0c4b96"/><circle cx="11" cy="10" r="2.500" fill="#dff3fb"/></svg></span>
            <span class="app-icon"><svg viewBox="0 0 24 22"><path d="M7 6V4h7v2" fill="none" stroke="#0d5794" stroke-width="1.500"/><rect x="1" y="5" width="19" height="16" rx="2" fill="#0b4f8c"/><path d="M6 9h4v4H6z" fill="#f25022"/><path d="M11 9h4v4h-4z" fill="#7fba00"/><path d="M6 14h4v4H6z" fill="#00a4ef"/><path d="M11 14h4v4h-4z" fill="#ffb900"/><circle cx="17.500" cy="6.500" r="6" fill="#0a78d1"/><text x="17.500" y="10" class="badge-text">1</text></svg></span>
            <span class="app-icon"><svg viewBox="0 0 20 20"><path d="M8 1l5 1-6 5v7l-5-2V6z" fill="#4a62d0"/><path d="M12 1l6 4v8l-5 2V7L8 4z" fill="#8f72dc"/><path d="M2 13l5-3 5 3 6 0-6 6H8z" fill="#3d9ddd"/><path d="M7 8l3-2 3 2v4l-3 1.500L7 12z" fill="#e6e6f4"/></svg></span>
            <span class="app-icon"><svg viewBox="0 0 20 20"><circle cx="10" cy="11" r="8.500" fill="#ff5a36"/><path d="M12 1c1 3 7 4 7 10a9 9 0 0 1-9 8c6-4 6-9 3-11-2-2-2-5-1-7z" fill="#ffb52e"/><circle cx="10" cy="11" r="4" fill="#7b3fc4"/><path d="M2 6c3-1 5 0 7 2l-4 2c1 3 4 4 7 3-3 4-9 2-10-7z" fill="#ff9324"/></svg></span>
            <span class="app-icon running"><svg viewBox="0 0 20 20"><rect x="3" y="1" width="14" height="18" fill="#4d6678"/><path d="M5 3h10v3H5z" fill="#bfe6f5"/><path d="M5 8h2.500v2H5zM9 8h2.500v2H9zM5 12h2.500v2H5zM9 12h2.500v2H9zM5 15.500h2.500v2H5zM9 15.500h2.500v2H9zM12.800 8H15v2h-2.200z" fill="#d7e6ee"/><path d="M12.800 12H15v5.500h-2.200z" fill="#1d3345"/></svg></span>
            <span class="app-icon running"><svg viewBox="0 0 20 20"><path d="M3 2h10v10H3z" fill="#fff" stroke="#c0392b" stroke-width="1.500" stroke-dasharray="2 1"/><path d="M10 6l3 10M18 8l-8 4" stroke="#7b8894" stroke-width="1.500"/><circle cx="11" cy="16" r="2" fill="none" stroke="#2b8dc5" stroke-width="1.500"/><circle cx="16" cy="12" r="2" fill="none" stroke="#2b8dc5" stroke-width="1.500"/></svg></span>
            <span class="app-icon running"><svg viewBox="0 0 20 20"><circle cx="11" cy="10" r="9" fill="#e2603c"/><path d="M11 1a9 9 0 0 1 9 9h-9z" fill="#f59a7d"/><rect x="1" y="5" width="10" height="10" rx="1" fill="#b93a1c"/><text x="6" y="13" class="badge-text">P</text></svg></span>
            <span class="app-icon running"><svg viewBox="0 0 20 20"><rect x="5" y="1" width="14" height="18" rx="1" fill="#2b7cd3"/><path d="M5 1h14v5H5z" fill="#41a5ee"/><path d="M5 13h14v6H5z" fill="#173f8c"/><rect x="1" y="5" width="10" height="10" rx="1" fill="#185abd"/><text x="6" y="13" class="badge-text">W</text></svg></span>
            <span class="app-icon running"><svg viewBox="0 0 20 20"><rect x="5" y="1" width="14" height="18" rx="1" fill="#21a366"/><path d="M5 10h14v9H5z" fill="#107c41"/><path d="M12 1h7v5h-7z" fill="#33c481"/><rect x="1" y="5" width="10" height="10" rx="1" fill="#0e6b38"/><text x="6" y="13" class="badge-text">X</text></svg></span>
            <span class="app-icon running"><svg viewBox="0 0 20 20"><rect x="5" y="1" width="14" height="18" rx="1" fill="#ca64ea"/><path d="M15 1h4v18h-4z" fill="#9332bf"/><rect x="1" y="5" width="10" height="10" rx="1" fill="#7719aa"/><text x="6" y="13" class="badge-text">N</text></svg></span>
            <span class="app-icon running current"><svg viewBox="0 0 22 20"><circle cx="10" cy="11" r="9" fill="#fbc116"/><path d="M2.200 6.500a9 9 0 0 1 15.600 0H10a4.500 4.500 0 0 0-4 2.500z" fill="#e33b2e"/><path d="M2.200 6.500L6.200 13.200a4.500 4.500 0 0 0 4.800 2.200L9 20A9 9 0 0 1 2.200 6.500z" fill="#269a4c"/><circle cx="10" cy="11" r="4.500" fill="#fff"/><circle cx="10" cy="11" r="3.500" fill="#3b7de8"/><circle cx="17" cy="5" r="5" fill="#78909c"/><text x="17" y="8" class="badge-text">B</text></svg></span>
            <span class="app-icon running"><svg viewBox="0 0 24 20"><path d="M9 6h9v9a5 5 0 0 1-9 2z" fill="#7b83eb"/><path d="M17 7h4v7a3 3 0 0 1-4 2z" fill="#5059c9"/><rect x="1" y="6" width="11" height="11" rx="1" fill="#4b53bc"/><text x="6" y="15" class="badge-text">T</text><circle cx="18" cy="6" r="6" fill="#cf2138"/><text x="18" y="9" class="badge-text">9+</text></svg></span>
            <span class="app-icon running"><svg viewBox="0 0 20 20"><rect x="3" y="2" width="14" height="17" fill="#41bfdc"/><path d="M4 1v3M7 1v3M10 1v3M13 1v3M16 1v3" stroke="#266f8a"/><path d="M5 7h10M5 10h10M5 13h10" stroke="#1a6c8d"/><path d="M3 17h14v2H3z" fill="#b5713c"/></svg></span>
            <span class="app-icon running"><svg viewBox="0 0 20 20"><path d="M2 3h13v16H2z" fill="#f3f6ea"/><path d="M3 8h11v9H3z" fill="#5eb22c"/><path d="M4 11q4-5 9 1l-3 3H5z" fill="#245d16"/><path d="M19 1l-6 13" stroke="#b6834a" stroke-width="1.500"/></svg></span>
        </div>
        <div class="tray">
            <svg viewBox="0 0 12 12"><path d="M2 8l4-4 4 4" class="line"/></svg>
            <svg class="wide-gap" viewBox="0 0 12 12"><path d="M3 10a2.500 2.500 0 0 1 0-5 3.500 3.500 0 0 1 6.500 0A2.500 2.500 0 0 1 9 10z" fill="#aaa" stroke="#333"/></svg>
            <svg class="wide-gap" viewBox="0 0 12 12"><rect x="4" y="0" width="4" height="7" rx="2" fill="#8db7e8" stroke="#2a64a8"/><path d="M2.500 5v1a3.500 3.500 0 0 0 7 0V5M6 9.500V12" fill="none" stroke="#2a64a8"/></svg>
            <svg class="wide-gap" viewBox="0 0 12 12"><path d="M.5 4.500a8 8 0 0 1 11 0M2.300 6.500a5.400 5.400 0 0 1 7.400 0M4 8.500a3 3 0 0 1 4 0" class="line"/><circle cx="6" cy="10.300" r="1"/></svg>
            <svg viewBox="0 0 13 12"><path d="M.5 4.500h2L5.500 2v8l-3-2.500h-2zM7.500 4a3 3 0 0 1 0 4M9.300 2.500a5 5 0 0 1 0 7M11 1a7 7 0 0 1 0 10" class="line"/></svg>
            <svg viewBox="0 0 12 12"><rect x="1" y="3" width="10" height="6" rx="1" class="line"/><path d="M2 4h6v4H2zM1 0v4h3V0z"/><path d="M9 12L6.500 9c1-1.500 2-.8 2.500 0 .5-.8 2-1.500 3 0z"/></svg>
            <div class="clock"><span>2:50 PM</span><span>10/30/2023</span></div>
            <span class="notice">1</span>
        </div>
    </div>
</body>
</html>
```
FILE: styles.css
```css
* { box-sizing: border-box; }
html, body { margin: 0; height: 100%; }
body { display: flex; flex-direction: column; min-height: 100vh; font-family: "Open Sans", "Noto Sans", sans-serif; font-size: 10px; color: #333; overflow: hidden; }
button, input { font: inherit; color: inherit; margin: 0; padding: 0; border: none; background: none; min-width: 0; }
button { cursor: pointer; white-space: nowrap; }
a { color: inherit; text-decoration: none; }
svg { fill: currentColor; flex: none; }
.sprite { position: absolute; width: 0; height: 0; }
.line { fill: none; stroke: currentColor; stroke-width: 1; }
.medium { stroke-width: 1.5; }
.i10 { width: 10px; height: 10px; }
.i12 { width: 12px; height: 12px; }
.i14 { width: 14px; height: 14px; }
.blue { color: #2d5f93; }
.green { color: #2ca41c; }
.red { color: #dc3545; }
.badge-text { font-size: 8px; font-weight: 700; fill: #fff; text-anchor: middle; }
.day { font-size: 6px; font-weight: 700; fill: #4285f4; text-anchor: middle; }

/* browser window */
.tab-strip { display: flex; height: 26px; background: #dcdfe4; }
.tab-pinned { flex: none; width: 37px; display: flex; align-items: center; justify-content: flex-end; padding-right: 9px; border-right: 1px solid #9a9ea5; margin: 6px 0 5px; }
.tabs { flex: 1; display: flex; min-width: 0; }
.tab { flex: 1; min-width: 0; display: flex; align-items: center; padding: 0 7px 0 9px; position: relative; }
.tab::after { content: ""; position: absolute; right: 0; top: 6px; height: 15px; border-right: 1px solid #9a9ea5; }
.tab span { margin-left: 6px; white-space: nowrap; mask-image: linear-gradient(90deg, #000 60%, transparent 105%); }
.tab span.short { margin-right: 7px; mask-image: none; }
.tab button { display: flex; width: 10px; margin-left: auto; }
.tab button svg { width: 10px; height: 10px; }
.tab.active { background: #fff; border-radius: 6px 6px 0 0; }
.tab.active::after { display: none; }
.sound { width: 9px; height: 8px; }
.gpt-dark { background: #26202b; color: #b98bc6; }
.gpt-green { background: #74aa9c; color: #fff; border-radius: 2px; }
.window-controls { flex: none; width: 208px; display: flex; justify-content: space-between; padding: 0 9px 0 12px; }
.window-controls button { display: flex; align-items: center; }
.window-controls button svg { width: 10px; height: 10px; }
.window-controls button:first-child { margin-right: 30px; }

.address-bar { display: flex; align-items: center; gap: 12px; height: 33px; padding: 0 11px; background: #fff; color: #4a4d51; }
.address-bar button { display: flex; }
.address-bar button svg { width: 12px; height: 12px; }
.address-bar .dim { color: #aaa; }
.omnibox { flex: 1; display: flex; align-items: center; gap: 13px; height: 26px; padding: 0 7px 0 8px; margin-right: -8px; background: #f1f2f2; border-radius: 13px; }
.url { flex: 1; margin-left: -6px; font-family: "Noto Sans", sans-serif; color: #63666a; }
.url b { font-weight: 400; color: #222; }
.extensions { display: flex; align-items: center; gap: 13px; height: 23px; padding: 0 5px; border: 1px solid #e3e3e3; border-radius: 12px; }
.profile { width: 17px; height: 17px; margin: 0 -2px; line-height: 17px; text-align: center; border-radius: 50%; background: #607d86; color: #fff; }
.address-bar > .i14 { margin-left: -6px; }

/* application shell */
.app { flex: 1; display: flex; position: relative; background: #2b3a4a; color: #c3c9cf; border-top: 1px solid #46525f; min-height: 0; }
.sidebar { width: 118px; display: flex; flex-direction: column; }
.brand { display: flex; justify-content: space-between; padding: 6px 7px 0 0; height: 49px; font-size: 12px; color: #fff; }
.brand span { padding-top: 11px; line-height: 16px; }
.collapse { width: 16px; height: 16px; border-radius: 50%; background: #3c6ea5; display: flex; align-items: center; justify-content: center; }
.collapse svg { width: 10px; height: 10px; }
.sidebar a { display: flex; align-items: center; gap: 7px; height: 27px; padding-left: 9px; font-size: 8px; }
.sidebar a svg { width: 11px; height: 9px; }
.sidebar a i { width: 11px; padding-left: 1px; font-style: normal; font-weight: 700; font-size: 10px; }
.sidebar .quick { height: 23px; gap: 5px; font-size: 9px; }
.caret, .sidebar a .caret { width: 5px; height: 3px; }
.sidebar .caret { margin-left: -3px; }
.version { margin-top: auto; font-size: 8px; line-height: 12px; color: #75808b; }
.copyright { font-size: 7px; line-height: 12px; color: #fff; white-space: nowrap; }

.main { flex: 1; min-width: 0; padding-right: 11px; }
.topbar { display: flex; align-items: center; gap: 5px; height: 28px; padding: 0 26px 0 9px; font-size: 12px; }
.home { width: 15px; height: 13px; }
.slash { color: #7f8a94; }
.top-links { display: flex; align-items: center; margin-left: auto; gap: 17px; font-size: 11px; }
.top-links a { display: flex; align-items: center; gap: 3px; }
.top-links svg { width: 11px; height: 12px; }
.top-links .caret { width: 6px; height: 4px; margin-left: 4px; }
.pro-mode { width: 66px; height: 26px; margin-right: -7px; border: 1px solid #5f6b76; border-radius: 3px; color: #89929b; font-size: 10px; }
.top-links .notify { gap: 8px; }

.panel { background: #e5e5e5; border-radius: 2px; color: #444; }
.panel-body { padding: 12px 12px 14px 13px; }
.panel input { background: #fdfdfd; border: 1px solid #eee; border-radius: 2px; height: 24px; padding: 0 7px; color: #666; }
.panel input::placeholder { color: #777; opacity: 1; }
.quote-row { display: flex; align-items: center; }
.quote-no { width: 79px; }
.org { flex: 1 1 268px; display: flex; margin-left: 15px; }
.org input { flex: 1; }
.org button { width: 24px; border: 1px solid #c2c2c2; color: #888; }
.org svg { width: 9px; height: 10px; vertical-align: middle; }
.outline, .stack { border: 1px solid #5c7fa5; border-radius: 3px; color: #45678d; }
.new-org { width: 95px; height: 24px; margin: 0 94px 0 14px; }
.quote-desc { flex: 1 1 268px; }
.lookup { width: 26px; height: 24px; margin: 0 242px 0 14px; border: 1px solid #aaa; border-radius: 2px; color: #777; }
.lookup svg { width: 10px; height: 10px; vertical-align: middle; }

.add-row { display: flex; justify-content: center; gap: 33px; margin-top: 10px; padding: 6px 0 2px; background: #ebebeb; }
.circles { display: flex; gap: 2px; }
.circle { width: 74px; height: 74px; display: flex; flex-direction: column; align-items: center; justify-content: space-between; padding: 10px 0; border-radius: 50%; color: #fff; font-size: 12px; font-weight: 700; line-height: 16px; }
.circle svg { width: 26px; height: 25px; }
.circle.file { background: #049ddb; }
.circle.library { background: #7a2ca3; color: #111; }
.circle.library svg { color: #fff; }
.circle.shapes { background: #fb8d10; border: 1px solid #a8742c; padding: 9px 0; }
.circle.other { background: #049c92; }
.stack { width: 85px; height: 64px; display: flex; flex-direction: column; }
.stack button { flex: 1; }
.stack button + button { border-top: 1px solid #5c7fa5; }

.totals { display: flex; gap: 2px; margin-top: 1px; }
.totals > button { width: 23px; border: 1px solid #aaa; border-radius: 2px; color: #888; }
.totals > button svg { width: 9px; height: 10px; vertical-align: middle; }
.totals-bar { flex: 1; display: flex; justify-content: space-between; height: 24px; line-height: 24px; padding: 0 10px 0 8px; background: #f5f6f6; font-size: 14px; font-weight: 500; color: #666b70; }
.totals-bar b { font-weight: 700; }

.item-tabs { display: flex; gap: 1px; margin-top: 9px; height: 25px; font-size: 8px; }
.item-tab { padding: 0 10px 1px; }
.item-tab.active { background: #fff; color: #777; }
.tools { display: flex; align-self: center; height: 19px; margin-left: auto; border: 1px solid #aaa; color: #aaa; }
.tools button { display: flex; align-items: center; gap: 2px; padding: 0 5px; }
.tools button + button { border-left: 1px solid #aaa; }
.tools .on, .tools .drop { color: #777; }
.tools .drop { width: 18px; padding: 0; justify-content: center; }
.tools svg { width: 9px; height: 9px; }
.tools .caret { width: 4px; height: 3px; }

.items { width: 100%; table-layout: fixed; border-collapse: collapse; background: #fdfdfd; font-size: 10px; color: #333; }
.c-expand { width: 20px; }
.c-num { width: 50px; }
.c-qty { width: 36px; }
.c-product { width: 49px; }
.c-time { width: 62px; }
.c-price { width: 123px; }
.c-total { width: 61px; }
.c-command { width: 96px; }
.c-scroll { width: 17px; }
.items th { height: 24px; padding: 0 0 0 5px; font-weight: 400; text-align: left; white-space: nowrap; background: #f7f9f9; border-right: 1px solid #e6e8e8; border-bottom: 1px solid #e6e8e8; }
.items th.bare { border-right: none; }
.items .sorted { background: #f1f4f6; padding-left: 5px; }
.sorted span { margin-left: 8px; color: #2a6ec2; font-weight: 700; }
.item td { height: 30px; padding: 0 5px; border-right: 1px solid #eaeaea; }
.items .expand { padding: 0 0 0 7px; border: none; }
.expand svg { width: 6px; height: 4px; color: #111; }
.items .num { text-align: right; }
.commands div { display: flex; gap: 4px; }
.items .commands { padding: 0 0 0 4px; border: none; }
.commands button { width: 18px; height: 19px; display: flex; align-items: center; justify-content: center; border: 1px solid #ccc; border-radius: 2px; background: #fff; }
.commands svg { width: 10px; height: 9px; }
.items .scroll { padding: 0; border: none; vertical-align: top; height: 1px; }
.scroll div { display: flex; flex-direction: column; justify-content: space-between; align-items: center; height: 100%; width: 15px; margin-left: 2px; padding: 6px 0 4px; background: #f5f5f5; color: #999; }
.scroll svg { width: 5px; height: 3px; }

.nested { padding: 4px 3px 5px 25px; }
.part { border: 1px solid #eee; }
.part-tabs { display: flex; gap: 1px; height: 25px; background: #43999a; border-radius: 0 2px 0 0; margin: -1px; }
.part-tabs button { padding: 0 10px; color: #3c6466; font-size: 9px; }
.part-tabs .active { background: #fdfdfd; color: #444; border: 1px solid #eee; border-bottom: none; }
.part-tabs .more { display: flex; align-items: center; color: #23494b; }
.more svg { width: 9px; height: 3px; }
.part-body { display: flex; gap: 12px; padding: 14px 0 10px 11px; }
.thumb { width: 122px; height: 82px; fill: none; }
.fields { flex: 1; line-height: 15px; }
.field { display: grid; grid-template-columns: minmax(0, 315fr) minmax(0, 173fr) minmax(0, 129fr) minmax(0, 48fr) minmax(0, 121fr) minmax(0, 62fr); column-gap: 15px; padding: 0 0 3px; }
.field.wide { grid-template-columns: minmax(0, 315fr) minmax(0, 345fr) minmax(0, 89fr) minmax(0, 129fr); height: 26px; }
.field.memo { margin-top: 5px; }
.field b, .field label { font-weight: 600; justify-self: end; white-space: nowrap; color: #111; }
.field span { color: #555; }
.field .nowrap { white-space: nowrap; }
.pin { width: 9px; height: 12px; margin: 3px 0 0 74px; color: #777; }
.panel .internal { margin-right: 11px; border-color: #eee; }
.panel input[type="checkbox"] { appearance: none; width: 11px; height: 11px; margin-top: 3px; padding: 0; border: 1px solid #666; }

.panel-footer { display: flex; justify-content: flex-end; align-items: center; height: 38px; padding: 0 12px; background: #dedede; }
.panel-footer button { width: 88px; height: 24px; border: 1px solid #35567d; border-radius: 2px; background: linear-gradient(#517eac, #3c638e); color: #fff; }

.page-scroll { width: 12px; display: flex; flex-direction: column; align-items: center; padding: 5px 0 4px; background: #f1f1f1; color: #888; }
.page-scroll svg { width: 6px; height: 3px; }
.thumb-bar { width: 12px; height: 90%; margin-top: 4px; background: #c0c1c0; }
.page-scroll .down { margin-top: auto; color: #444; }

/* floating layers over the page */
.camera { position: absolute; left: 5px; bottom: 4px; width: 136px; height: 136px; border-radius: 50%; background: #768e99; color: #fff; font: 500 74px/136px Roboto, sans-serif; text-align: center; }
.camera button { position: absolute; left: 57px; width: 22px; height: 22px; display: flex; align-items: center; justify-content: center; border: 1px solid #8c979d; border-radius: 50%; background: #1d1d1d; color: #fff; }
.camera .swap { top: 76px; }
.camera .dots { top: 103px; }
.swap svg { width: 14px; height: 14px; }
.dots svg { width: 10px; height: 4px; }
.cursor { position: absolute; left: 84px; bottom: 134px; width: 10px; height: 15px; }
.recorder { position: absolute; left: 151px; bottom: 7px; width: 144px; height: 33px; display: flex; align-items: center; justify-content: space-between; padding: 0 15px; border: 1px solid #777; border-radius: 17px; background: #1e1e1e; color: #9a9a9a; font-size: 10px; }
.recorder b { color: #fff; }
.recorder svg { width: 11px; height: 11px; }
.divider { height: 16px; border-left: 1px solid #3a3a3a; }
.share-bar { position: absolute; left: 436px; bottom: 6px; width: 409px; height: 33px; display: flex; align-items: center; padding: 0 8px; background: #f7f8f8; color: #444; }
.grip { width: 4px; height: 8px; border: 1px solid #bbb; border-width: 0 1px; }
.share-text { flex: 1; margin-left: 6px; font-size: 9px; white-space: nowrap; }
.share-bar button { width: 78px; height: 24px; border-radius: 2px; background: #1769e0; color: #fff; font-size: 9px; font-weight: 600; }
.share-bar a { margin-left: 8px; color: #1b62b5; font-size: 9px; text-decoration: underline; }
.chat { position: absolute; right: 19px; bottom: 4px; width: 37px; height: 37px; border-radius: 50%; background: #0a66cf; display: flex; align-items: center; justify-content: center; }
.chat svg { width: 19px; height: 17px; }

/* taskbar */
.taskbar { display: flex; align-items: center; height: 37px; background: linear-gradient(90deg, #dadce0, #dcdcee 50%, #dadce0); }
.weather { width: 248px; display: flex; align-items: center; gap: 3px; padding-left: 15px; font-size: 9px; line-height: 12px; }
.weather svg { width: 21px; height: 21px; }
.weather strong, .weather span { display: block; font-weight: 400; }
.weather span { color: #666; }
.apps { display: flex; align-items: center; height: 100%; }
.start { width: 18px; height: 18px; margin: 0 12px 0 8px; }
.search { display: flex; align-items: center; width: 166px; height: 23px; margin-right: 2px; padding-left: 9px; border-radius: 12px; background: #f2f2fa; }
.search > svg { width: 11px; height: 11px; color: #222; }
.search input { flex: 1; margin-left: 8px; }
.search input::placeholder { color: #555; opacity: 1; }
.brief { width: 40px; height: 23px; display: flex; align-items: center; justify-content: center; border-radius: 12px; background: #e8e6ea; }
.brief svg { width: 18px; height: 14px; }
.app-icon { position: relative; width: 34px; height: 28px; display: flex; align-items: center; justify-content: center; }
.app-icon svg { width: 22px; height: 20px; }
.app-icon.running::after { content: ""; position: absolute; bottom: -2px; width: 5px; height: 2px; border-radius: 1px; background: #888c94; }
.app-icon.current { background: #f3f4f8; border-radius: 3px; }
.app-icon.current::after { width: 12px; background: #1976d2; }
.tray { display: flex; align-items: center; gap: 7px; margin-left: auto; padding-right: 15px; font-size: 9px; color: #333; }
.tray svg { width: 12px; height: 12px; }
.tray .wide-gap { margin-left: 6px; }
.clock { display: flex; flex-direction: column; align-items: flex-end; width: 52px; line-height: 12px; }
.notice { width: 12px; height: 12px; border-radius: 50%; background: #0a74d1; color: #fff; font-size: 8px; line-height: 12px; text-align: center; }
```
